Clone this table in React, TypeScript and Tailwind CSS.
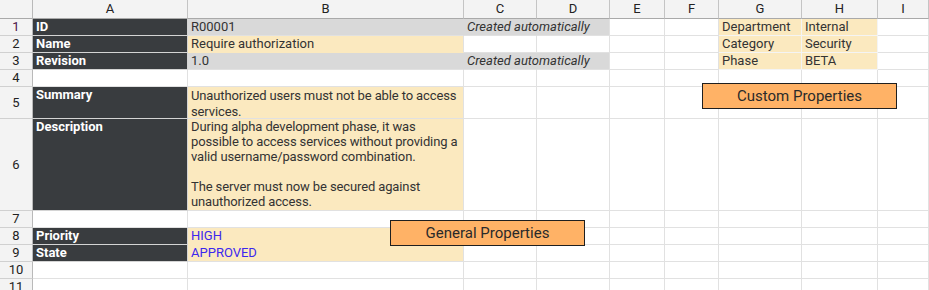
import React from 'react';

const cols = ['A', 'B', 'C', 'D', 'E', 'F', 'G', 'H', 'I'];

type CellProps = {
  children?: React.ReactNode;
  className?: string;
  color?: string;
};

const Cell = ({ children, className = '', color = 'text-[#333]' }: CellProps) => (
  <div
    className={`border-r border-b border-[#e1e1e1] px-[3px] leading-[15px] text-[13px] whitespace-nowrap ${color} ${className}`}
  >
    {children}
  </div>
);

const Label = ({ children }: { children: React.ReactNode }) => (
  <div className="border-r border-b border-[#d4d4d4] bg-[#393c3f] px-[3px] leading-[15px] text-[13px] font-bold text-white">
    {children}
  </div>
);

const RowHead = ({ n, color = 'text-[#222]' }: { n: number; color?: string }) => (
  <div className={`flex items-center justify-center border-r border-b border-r-[#b9b9b9] border-b-[#d0d0d0] bg-[#f3f3f3] text-[13px] ${color}`}>
    {n}
  </div>
);

const Empty = ({ count }: { count: number }) => (
  <>
    {Array.from({ length: count }).map((_, i) => (
      <Cell key={i} />
    ))}
  </>
);

const App = () => {
  return (
    <div className="relative h-[290px] w-[929px] overflow-hidden bg-white font-[Roboto,sans-serif]">
      <div className="grid grid-cols-[33px_155px_276px_73px_73px_55px_54px_83px_76px_1fr] grid-rows-[19px_17px_17px_17px_17px_32px_92px_17px_17px_17px_17px_17px]">
        {/* header */}
        <div className="border-r border-b border-r-[#b9b9b9] border-b-[#a9a9a9] bg-[#f3f3f3]" />
        {cols.map((c) => (
          <div
            key={c}
            className="flex items-center justify-center border-r border-b border-r-[#c4c4c4] border-b-[#a9a9a9] bg-[#f3f3f3] text-[13px] text-[#222]"
          >
            {c}
          </div>
        ))}

        {/* 1 */}
        <RowHead n={1} color="text-[#4b1248]" />
        <Label>ID</Label>
        <Cell className="bg-[#d9d9d9] border-r-[#d9d9d9]">R00001</Cell>
        <Cell className="relative z-10 bg-[#d9d9d9] border-r-[#d9d9d9] italic">Created automatically</Cell>
        <Cell className="bg-[#d9d9d9]" />
        <Empty count={2} />
        <Cell className="bg-[#fbe9bf] border-[#f4f4f4]">Department</Cell>
        <Cell className="bg-[#fbe9bf] border-[#f4f4f4]">Internal</Cell>
        <Cell />

        {/* 2 */}
        <RowHead n={2} />
        <Label>Name</Label>
        <Cell className="bg-[#fbe9bf] border-b-[#fbe9bf]">Require authorization</Cell>
        <Empty count={4} />
        <Cell className="bg-[#fbe9bf] border-[#f4f4f4]">Category</Cell>
        <Cell className="bg-[#fbe9bf] border-[#f4f4f4]">Security</Cell>
        <Cell />

        {/* 3 */}
        <RowHead n={3} />
        <Label>Revision</Label>
        <Cell className="bg-[#d9d9d9] border-r-[#d9d9d9]">1.0</Cell>
        <Cell className="relative z-10 bg-[#d9d9d9] border-r-[#d9d9d9] italic">Created automatically</Cell>
        <Cell className="bg-[#d9d9d9]" />
        <Empty count={2} />
        <Cell className="bg-[#fbe9bf] border-[#f4f4f4]">Phase</Cell>
        <Cell className="bg-[#fbe9bf] border-[#f4f4f4]">BETA</Cell>
        <Cell />

        {/* 4 */}
        <RowHead n={4} />
        <Empty count={9} />

        {/* 5 */}
        <RowHead n={5} />
        <Label>Summary</Label>
        <Cell className="bg-[#fbe9bf] pt-px leading-[16px] tracking-[-0.12px]">
          Unauthorized users must not be able to access
          <br />
          services.
        </Cell>
        <Empty count={7} />

        {/* 6 */}
        <RowHead n={6} />
        <Label>Description</Label>
        <Cell className="bg-[#fbe9bf] tracking-[-0.12px]">
          During alpha development phase, it was
          <br />
          possible to access services without providing a
          <br />
          valid username/password combination.
          <br />
          <br />
          The server must now be secured against
          <br />
          unauthorized access.
        </Cell>
        <Empty count={7} />

        {/* 7 */}
        <RowHead n={7} />
        <Empty count={9} />

        {/* 8 */}
        <RowHead n={8} />
        <Label>Priority</Label>
        <Cell color="text-[#3c28ee]" className="bg-[#fbe9bf] border-b-[#fbe9bf]">HIGH</Cell>
        <Empty count={7} />

        {/* 9 */}
        <RowHead n={9} />
        <Label>State</Label>
        <Cell color="text-[#3c28ee]" className="bg-[#fbe9bf]">APPROVED</Cell>
        <Empty count={7} />

        {/* 10 */}
        <RowHead n={10} />
        <Empty count={9} />

        {/* 11 */}
        <RowHead n={11} />
        <Empty count={9} />
      </div>

      {/* floating labels */}
      <div className="absolute left-[390px] top-[220px] flex h-[26px] w-[195px] items-center justify-center border border-[#1f1f1f] bg-[#ffb266] text-[15px] text-[#2a2a2a]">
        General Properties
      </div>
      <div className="absolute left-[702px] top-[83px] flex h-[26px] w-[195px] items-center justify-center border border-[#1f1f1f] bg-[#ffb266] text-[15px] text-[#2a2a2a]">
        Custom Properties
      </div>
    </div>
  );
};

export default App;
